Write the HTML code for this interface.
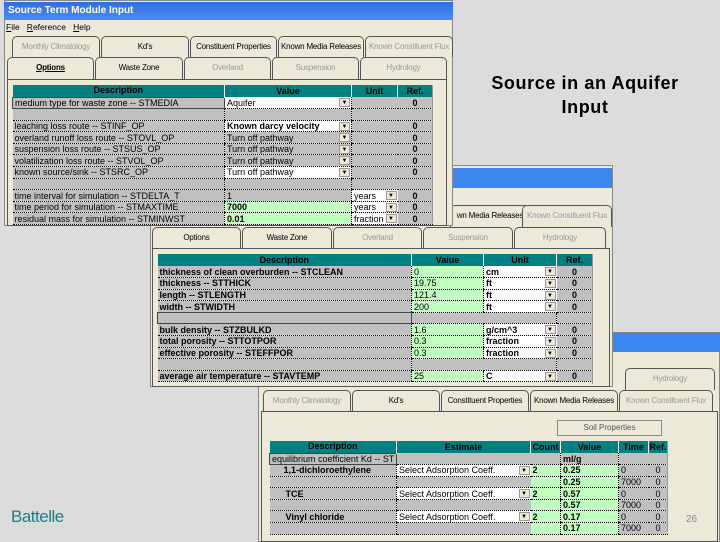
<!DOCTYPE html>
<html><head><meta charset="utf-8">
<style>
*{margin:0;padding:0;box-sizing:border-box}
body{width:720px;height:540px;background:#dcdcdc;position:relative;overflow:hidden;font-family:"Liberation Sans",Arial,sans-serif}
.a{position:absolute}
.win{position:absolute;background:#ece9d8;border:1px solid #888}
.title{position:absolute;background:linear-gradient(#2f6de0,#4a8ff5);color:#fff;font-weight:bold;font-size:10px;padding:3px 4px}
.tab{position:absolute;background:#ece9d8;border:1px solid #555;border-bottom:none;border-radius:5px 5px 0 0;font-size:8px;color:#999;text-align:center;line-height:20px;white-space:nowrap;overflow:hidden;letter-spacing:-0.2px}
.tab.on{color:#000}
.panel{position:absolute;border:1px solid #555;background:#ece9d8}
table{position:absolute;border-collapse:collapse;table-layout:fixed;font-size:9px}
td{height:11.6px;background:#c0c0c0;border-bottom:1px dotted #000;white-space:nowrap;overflow:hidden;padding:0 2px;line-height:10px;position:relative}
th{background:#008080;color:#000;font-weight:bold;font-size:9px;height:12px;border-right:1px solid #fff;line-height:11px}
td.v{border-left:1px dotted #000}
.g{background:#c0ffc0!important}
.w{background:#fff!important}
.c{text-align:center;font-weight:bold}
.b{font-weight:bold}
.dd{position:absolute;right:1px;top:1px;width:11px;height:9px;background:#ece9d8;border:1px solid #999;font-size:6px;text-align:center;line-height:8px}
.sb{position:absolute;background:#ece9d8;border-left:1px solid #999}
.layer{position:absolute;left:0;top:0;width:720px;height:540px}
</style></head><body>

<div class="a" style="left:478px;top:71px;width:214px;text-align:center;font-size:18px;font-weight:bold;line-height:24px;color:#000;letter-spacing:0.6px">Source in an Aquifer Input</div>
<div class="a" style="left:11px;top:507px;font-size:17px;color:#1f7f7f;letter-spacing:-0.5px">Battelle</div>

<!-- Window 3 (bottom) -->
<div class="layer">
<div class="win" style="left:258px;top:332px;width:462px;height:210px"></div>
<div class="title" style="left:612px;top:333px;width:108px;height:19px;background:#3c86f0"></div>
<div class="tab" style="left:625px;top:368px;width:90px;height:22px">Hydrology</div>
<div class="tab" style="left:263px;top:390px;width:88px;height:22px">Monthly Climatology</div>
<div class="tab on" style="left:352px;top:390px;width:88px;height:22px">Kd's</div>
<div class="tab on" style="left:441px;top:390px;width:88px;height:22px">Constituent Properties</div>
<div class="tab on" style="left:530px;top:390px;width:88px;height:22px">Known Media Releases</div>
<div class="tab" style="left:619px;top:390px;width:94px;height:22px">Known Constituent Flux</div>
<div class="panel" style="left:261px;top:411px;width:457px;height:131px"></div>
<div class="a" style="left:557px;top:420px;width:105px;height:16px;border:1px solid #888;background:#ece9d8;font-size:8px;color:#555;text-align:center;line-height:14px">Soil Properties</div>
<table style="left:269px;top:441px;width:398px">
<colgroup><col style="width:127px"><col style="width:134px"><col style="width:30px"><col style="width:58px"><col style="width:30px"><col style="width:19px"></colgroup>
<tr><th>Description</th><th>Estimate</th><th>Count</th><th>Value</th><th>Time</th><th>Ref.</th></tr>
<tr><td style="border:1px solid #444">equilibrium coefficient Kd -- ST</td><td class="v"></td><td></td><td class="v b">ml/g</td><td class="v"></td><td></td></tr>
<tr><td class="b" style="padding-left:14px">1,1-dichloroethylene</td><td class="v w">Select Adsorption Coeff.<span class="dd">▼</span></td><td class="g b">2</td><td class="v g b">0.25</td><td class="v">0</td><td class="c" style="font-weight:normal">0</td></tr>
<tr><td></td><td class="v"></td><td class="g"></td><td class="v g b">0.25</td><td class="v">7000</td><td class="c" style="font-weight:normal">0</td></tr>
<tr><td class="b" style="padding-left:16px">TCE</td><td class="v w">Select Adsorption Coeff.<span class="dd">▼</span></td><td class="g b">2</td><td class="v g b">0.57</td><td class="v">0</td><td class="c" style="font-weight:normal">0</td></tr>
<tr><td></td><td class="v"></td><td class="g"></td><td class="v g b">0.57</td><td class="v">7000</td><td class="c" style="font-weight:normal">0</td></tr>
<tr><td class="b" style="padding-left:16px">Vinyl chloride</td><td class="v w">Select Adsorption Coeff.<span class="dd">▼</span></td><td class="g b">2</td><td class="v g b">0.17</td><td class="v">0</td><td class="c" style="font-weight:normal">0</td></tr>
<tr><td></td><td class="v"></td><td class="g"></td><td class="v g b">0.17</td><td class="v">7000</td><td class="c" style="font-weight:normal">0</td></tr>
</table>
<div class="sb" style="left:667px;top:441px;width:13px;height:90px"></div>
<div class="a" style="left:686px;top:514px;font-size:10px;color:#888">26</div>
</div>

<!-- Window 2 (middle) -->
<div class="layer">
<div class="win" style="left:150px;top:165px;width:463px;height:222px"></div>
<div class="title" style="left:452px;top:168px;width:160px;height:20px;background:#3c86f0"></div>
<div class="tab on" style="left:450px;top:205px;width:80px;height:22px">wn Media Releases</div>
<div class="tab" style="left:522px;top:205px;width:90px;height:22px">Known Constituent Flux</div>
<div class="tab on" style="left:152px;top:227px;width:89px;height:22px">Options</div>
<div class="tab on" style="left:242px;top:227px;width:90px;height:22px">Waste Zone</div>
<div class="tab" style="left:333px;top:227px;width:89px;height:22px">Overland</div>
<div class="tab" style="left:423px;top:227px;width:90px;height:22px">Suspension</div>
<div class="tab" style="left:514px;top:227px;width:92px;height:22px">Hydrology</div>
<div class="panel" style="left:152px;top:248px;width:458px;height:139px"></div>
<table style="left:157px;top:254px;width:435px">
<colgroup><col style="width:254px"><col style="width:72px"><col style="width:73px"><col style="width:36px"></colgroup>
<tr><th>Description</th><th>Value</th><th>Unit</th><th>Ref.</th></tr>
<tr><td class="b">thickness of clean overburden -- STCLEAN</td><td class="v g">0</td><td class="v w b">cm<span class="dd">▼</span></td><td class="c">0</td></tr>
<tr><td class="b">thickness -- STTHICK</td><td class="v g">19.75</td><td class="v w b">ft<span class="dd">▼</span></td><td class="c">0</td></tr>
<tr><td class="b">length -- STLENGTH</td><td class="v g">121.4</td><td class="v w b">ft<span class="dd">▼</span></td><td class="c">0</td></tr>
<tr><td class="b">width -- STWIDTH</td><td class="v g">200</td><td class="v w b">ft<span class="dd">▼</span></td><td class="c">0</td></tr>
<tr><td style="border:1px solid #444"></td><td class="v"></td><td></td><td class="v"></td></tr>
<tr><td class="b">bulk density -- STZBULKD</td><td class="v g">1.6</td><td class="v w b">g/cm^3<span class="dd">▼</span></td><td class="c">0</td></tr>
<tr><td class="b">total porosity -- STTOTPOR</td><td class="v g">0.3</td><td class="v w b">fraction<span class="dd">▼</span></td><td class="c">0</td></tr>
<tr><td class="b">effective porosity -- STEFFPOR</td><td class="v g">0.3</td><td class="v w b">fraction<span class="dd">▼</span></td><td class="c">0</td></tr>
<tr><td></td><td class="v"></td><td></td><td class="v"></td></tr>
<tr><td class="b">average air temperature -- STAVTEMP</td><td class="v g">25</td><td class="v w b">C<span class="dd">▼</span></td><td class="c">0</td></tr>
</table>
<div class="sb" style="left:592px;top:254px;width:11px;height:130px"></div>
</div>

<!-- Window 1 (top) -->
<div class="layer">
<div class="win" style="left:4px;top:0;width:449px;height:226px"></div>
<div class="title" style="left:4px;top:2px;width:449px;height:18px">Source Term Module Input</div>
<div class="a" style="left:6px;top:22px;font-size:8.5px"><u>F</u>ile&nbsp;&nbsp; <u>R</u>eference&nbsp;&nbsp; <u>H</u>elp</div>
<div class="tab" style="left:12px;top:36px;width:88px;height:21px">Monthly Climatology</div>
<div class="tab on" style="left:101px;top:36px;width:88px;height:21px">Kd's</div>
<div class="tab on" style="left:190px;top:36px;width:87px;height:21px">Constituent Properties</div>
<div class="tab on" style="left:278px;top:36px;width:86px;height:21px">Known Media Releases</div>
<div class="tab" style="left:365px;top:36px;width:88px;height:21px">Known Constituent Flux</div>
<div class="tab on" style="left:7px;top:57px;width:87px;height:23px;font-weight:bold;text-decoration:underline">Options</div>
<div class="tab on" style="left:95px;top:57px;width:88px;height:23px">Waste Zone</div>
<div class="tab" style="left:184px;top:57px;width:87px;height:23px">Overland</div>
<div class="tab" style="left:272px;top:57px;width:87px;height:23px">Suspension</div>
<div class="tab" style="left:360px;top:57px;width:87px;height:23px">Hydrology</div>
<div class="panel" style="left:7px;top:79px;width:440px;height:147px"></div>
<table style="left:12px;top:85px;width:420px">
<colgroup><col style="width:212px"><col style="width:127px"><col style="width:46px"><col style="width:35px"></colgroup>
<tr><th>Description</th><th>Value</th><th>Unit</th><th>Ref.</th></tr>
<tr><td style="border:1px solid #444">medium type for waste zone -- STMEDIA</td><td class="v w">Aquifer<span class="dd">▼</span></td><td class="v"></td><td class="c">0</td></tr>
<tr><td></td><td class="v"></td><td class="v"></td><td></td></tr>
<tr><td>leaching loss route -- STINF_OP</td><td class="v w b">Known darcy velocity<span class="dd">▼</span></td><td class="v"></td><td class="c">0</td></tr>
<tr><td>overland runoff loss route -- STOVL_OP</td><td class="v">Turn off pathway<span class="dd">▼</span></td><td class="v"></td><td class="c">0</td></tr>
<tr><td>suspension loss route -- STSUS_OP</td><td class="v">Turn off pathway<span class="dd">▼</span></td><td class="v"></td><td class="c">0</td></tr>
<tr><td>volatilization loss route -- STVOL_OP</td><td class="v">Turn off pathway<span class="dd">▼</span></td><td class="v"></td><td class="c">0</td></tr>
<tr><td>known source/sink -- STSRC_OP</td><td class="v w">Turn off pathway<span class="dd">▼</span></td><td class="v"></td><td class="c">0</td></tr>
<tr><td></td><td class="v"></td><td class="v"></td><td></td></tr>
<tr><td>time interval for simulation -- STDELTA_T</td><td class="v">1</td><td class="v w">years<span class="dd">▼</span></td><td class="c">0</td></tr>
<tr><td>time period for simulation -- STMAXTIME</td><td class="v g b">7000</td><td class="v w">years<span class="dd">▼</span></td><td class="c">0</td></tr>
<tr><td>residual mass for simulation -- STMINWST</td><td class="v g b">0.01</td><td class="v w">fraction<span class="dd">▼</span></td><td class="c">0</td></tr>
</table>
<div class="sb" style="left:432px;top:85px;width:11px;height:138px"></div>
</div>
</body></html>
